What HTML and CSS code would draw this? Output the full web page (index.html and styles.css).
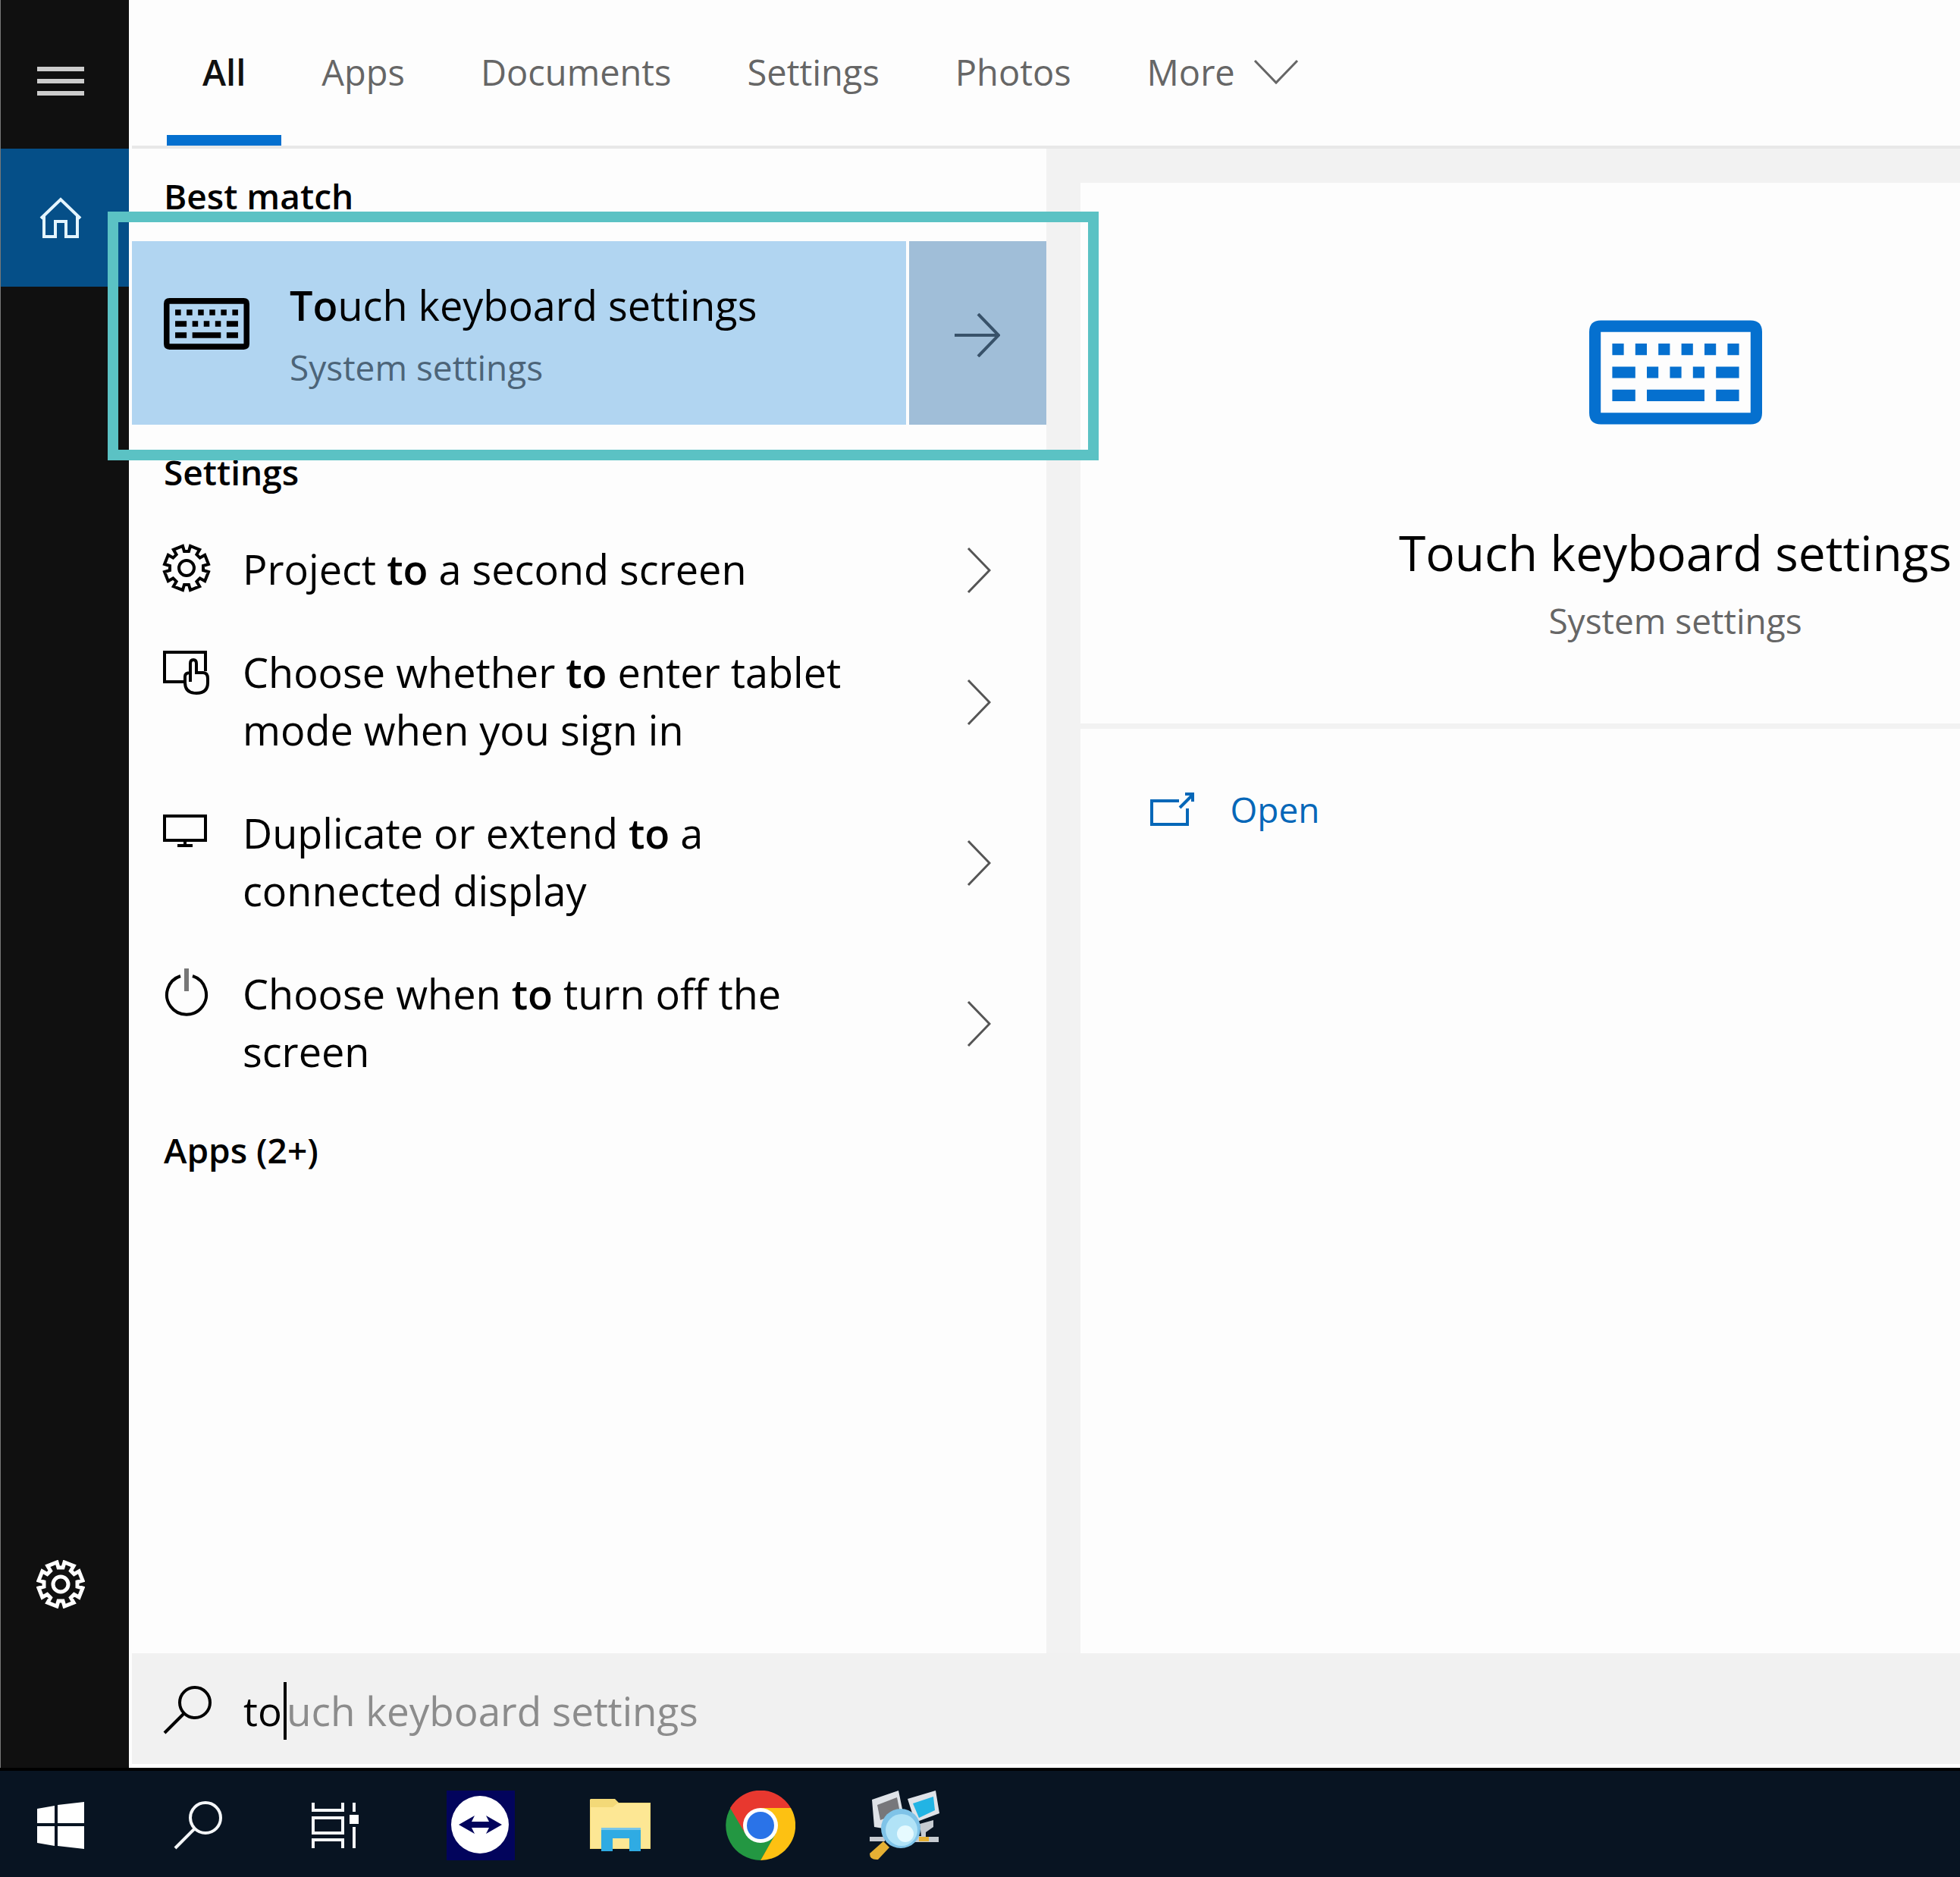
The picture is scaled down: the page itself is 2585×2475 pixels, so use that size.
FILE: index.html
```html
<!DOCTYPE html>
<html lang="en">
	<head>
		<meta charset="UTF-8" />
		<meta name="viewport" content="width=device-width, initial-scale=1.0" />
		<title>Search</title>
		<link rel="stylesheet" href="styles.css">
	</head>
	<body>
		<!-- shared icons -->
		<svg class="sprite" aria-hidden="true">
			<symbol id="gear" viewBox="-32 -32 64 64">
				<path d="M-5-29L-3-22H3L5-29L17.2-24.2L13.4-17.7L17.7-13.4L24.2-17.2L29-5L22-3V3L29 5L24.2 17.2L17.7 13.4L13.4 17.7L17.2 24.2L5 29L3 22H-3L-5 29L-17.2 24.2L-13.4 17.7L-17.7 13.4L-24.2 17.2L-29 5L-22 3V-3L-29-5L-24.2-17.2L-17.7-13.4L-13.4-17.7L-17.2-24.2Z" />
				<circle r="10" />
			</symbol>
			<symbol id="keyboard" viewBox="0 0 15 9">
				<path fill-rule="evenodd" d="M1 0H14Q15 0 15 1V8Q15 9 14 9H1Q0 9 0 8V1Q0 0 1 0ZM1 1V8H14V1Z" />
				<path d="M2 2h1v1H2zM4 2h1v1H4zM6 2h1v1H6zM8 2h1v1H8zM10 2h1v1h-1zM12 2h1v1h-1zM2 4h2v1H2zM5 4h1v1H5zM7 4h1v1H7zM9 4h1v1H9zM11 4h2v1h-2zM2 6h2v1H2zM5 6h5v1H5zM11 6h2v1h-2z" />
			</symbol>
			<symbol id="chevron" viewBox="0 0 32 62">
				<path d="M2 2L30 31L2 60" />
			</symbol>
			<symbol id="search" viewBox="0 0 64 64">
				<circle cx="42" cy="22" r="20" />
				<path d="M28 36L2 62" />
			</symbol>
		</svg>

		<div class="desktop">
			<div class="window">
				<nav class="sidebar">
					<button class="side-btn menu" aria-label="Menu">
						<svg width="62" height="38" viewBox="0 0 62 38"><path d="M0 3H62M0 19H62M0 35H62" stroke-width="6" /></svg>
					</button>
					<button class="side-btn home" aria-label="Home">
						<svg width="56" height="56" viewBox="0 0 56 56"><path d="M2 29L28 4L54 29M6 26V53H21V33H35V53H50V26" stroke-width="4" /></svg>
					</button>
					<button class="side-btn options" aria-label="Settings">
						<svg width="64" height="64"><use href="#gear" /></svg>
					</button>
				</nav>

				<main class="panel">
					<header class="tabs">
						<button class="tab active">All</button>
						<button class="tab">Apps</button>
						<button class="tab">Documents</button>
						<button class="tab">Settings</button>
						<button class="tab">Photos</button>
						<button class="tab">More
							<svg width="60" height="34" viewBox="0 0 60 34"><path d="M2 2L30 31L58 2" /></svg>
						</button>
					</header>

					<div class="content">
						<section class="results">
							<h2>Best match</h2>
							<div class="best">
								<button class="best-item">
									<svg class="keyboard" width="113" height="68"><use href="#keyboard" /></svg>
									<span>
										<span class="best-title"><b>To</b>uch keyboard settings</span>
										<span class="best-sub">System settings</span>
									</span>
								</button>
								<button class="best-more" aria-label="Show details">
									<svg width="60" height="58" viewBox="0 0 60 58"><path d="M0 29H57M31 1L58 29L31 57" /></svg>
								</button>
								<div class="highlight"></div>
							</div>

							<h2>Settings</h2>
							<button class="item">
								<svg class="icon" width="64" height="64"><use href="#gear" /></svg>
								<span>Project <b>to</b> a second screen</span>
								<svg class="chevron" width="32" height="62"><use href="#chevron" /></svg>
							</button>
							<button class="item">
								<svg class="icon" width="64" height="64" viewBox="0 0 64 64"><path d="M29 46H3V7H57V32M37 46V22Q37 17 41 17Q45 17 45 22V34H54Q60 34 60 42V47Q60 61 45 61Q30 61 30 47V39Q30 34 37 34" /></svg>
								<span>Choose whether <b>to</b> enter tablet<br>mode when you sign in</span>
								<svg class="chevron" width="32" height="62"><use href="#chevron" /></svg>
							</button>
							<button class="item">
								<svg class="icon" width="64" height="64" viewBox="0 0 64 64"><path d="M3 11H57V43H3ZM30 43V50M20 50H40" /></svg>
								<span>Duplicate or extend <b>to</b> a<br>connected display</span>
								<svg class="chevron" width="32" height="62"><use href="#chevron" /></svg>
							</button>
							<button class="item">
								<svg class="icon" width="64" height="64" viewBox="0 0 64 64"><path d="M24 10A26 26 0 1 0 40 10" /><path class="soft" d="M32 0V30" /></svg>
								<span>Choose when <b>to</b> turn off the<br>screen</span>
								<svg class="chevron" width="32" height="62"><use href="#chevron" /></svg>
							</button>

							<h2>Apps (2+)</h2>
						</section>

						<section class="preview">
							<div class="card">
								<div class="card-head">
									<svg class="keyboard" width="228" height="138"><use href="#keyboard" /></svg>
									<h1>Touch keyboard settings</h1>
									<p>System settings</p>
								</div>
								<a class="open" href="#">
									<svg width="58" height="44" viewBox="0 0 58 44"><path d="M38 11H2V42H49V21M39 20L55 4M46 2H56V12" /></svg>
									Open
								</a>
							</div>
						</section>
					</div>

					<label class="searchbar">
						<svg width="64" height="64"><use href="#search" /></svg>
						<span class="typed">
							<input type="text" value="to" aria-label="Search">
							<span class="caret"></span>
							<span class="hint">uch keyboard settings</span>
						</span>
					</label>
				</main>
			</div>

			<footer class="taskbar">
				<div class="system">
					<button aria-label="Start">
						<svg width="62" height="62" viewBox="0 0 62 62"><path fill="#fff" d="M0 9L23 5V28H0ZM27 4L62 0V28H27ZM0 32H23V58L0 54ZM27 32H62V62L27 58Z" /></svg>
					</button>
					<button aria-label="Search">
						<svg class="line" width="64" height="64"><use href="#search" /></svg>
					</button>
					<button aria-label="Task view">
						<svg class="line" width="62" height="60" viewBox="0 0 62 60"><path d="M2 0V10H41V0M2 60V49H41V60M2 20H41V40H2ZM56 0V12M56 32V60" /><path fill="#fff" stroke="none" d="M50 16H62V28H50Z" /></svg>
					</button>
				</div>
				<div class="apps">
					<button aria-label="TeamViewer">
						<svg width="90" height="92" viewBox="0 0 90 92">
							<path fill="#02045c" d="M0 0H90V92H0Z" />
							<circle cx="44" cy="45" r="38" fill="#fff" />
							<path fill="#02045c" d="M16 45L37 33L33 41H56L52 33L73 45L52 57L56 49H33L37 57Z" />
						</svg>
					</button>
					<button aria-label="File Explorer">
						<svg width="82" height="70" viewBox="0 0 82 70">
							<path fill="#f3d978" d="M2 0H34L39 5H81V66H1V1Z" />
							<path fill="#fde794" d="M2 11H31L37 6H80V65H2Z" />
							<path fill="#7ac6e8" d="M16 38H68V43H16Z" />
							<path fill="#2fabe3" d="M16 41H68V69H53V52H31V69H16Z" />
						</svg>
					</button>
					<button aria-label="Google Chrome">
						<svg width="92" height="92" viewBox="0 0 92 92">
							<path fill="#239742" d="M46 46L7 22A46 46 0 0 0 46 92L66 58Z" />
							<path fill="#fdc112" d="M46 23H86A46 46 0 0 1 46 92L66 57Z" />
							<path fill="#e8382f" d="M46 46L26 57L6 23A46 46 0 0 1 86 23H46Z" />
							<circle cx="46" cy="46" r="23" fill="#fff" />
							<circle cx="46" cy="46" r="18" fill="#2a73e8" />
						</svg>
					</button>
					<button aria-label="Network scanner">
						<svg width="92" height="92" viewBox="0 0 92 92">
							<path fill="#dfe3e8" d="M3 12L38 0L45 34L18 50L6 48ZM50 11L87 0L92 30L60 42Z" />
							<path fill="#77777b" d="M10 19L36 9L40 29L14 39Z" />
							<path fill="#22b4e4" d="M57 17L84 8L86 26L65 36Z" />
							<path fill="#c6cbd1" d="M66 44L84 39V48L74 55V61H91V68H60V60H68ZM0 61H20V67H0Z" />
							<path fill="#e5b034" d="M65 61H78V67H65ZM18 67L26 75L11 91Q0 92 0 83Z" />
							<circle cx="41" cy="50" r="26" fill="#7fc3e8" />
							<circle cx="42" cy="52" r="21" fill="#b1e3f7" />
							<circle cx="47" cy="57" r="11" fill="#e6faff" />
						</svg>
					</button>
				</div>
			</footer>
		</div>
	</body>
</html>
```

FILE: styles.css
```css
* {
	box-sizing: border-box;
}
body {
	margin: 0;
	font-family: "Open Sans", "Noto Sans", sans-serif;
	font-size: 54px;
	line-height: 76px;
	color: #000;
	background: #fdfdfd;
}
button,
input {
	font: inherit;
	color: inherit;
	background: none;
	border: 0;
	padding: 0;
	margin: 0;
}
button {
	text-align: left;
}
b {
	font-weight: 600;
}
svg {
	flex: none;
	display: block;
	fill: none;
	stroke: currentColor;
	stroke-width: 4;
}
.sprite {
	position: absolute;
	width: 0;
	height: 0;
}
.desktop {
	display: flex;
	flex-direction: column;
	min-height: 100vh;
	overflow: hidden;
}
.window {
	display: flex;
	flex: 1;
}

/* left bar */
.sidebar {
	display: flex;
	flex-direction: column;
	flex: none;
	width: 170px;
	padding-bottom: 151px;
	background: #101010;
	border-left: 1px solid #777;
}
.side-btn {
	display: flex;
	align-items: center;
	justify-content: center;
	height: 182px;
	padding-right: 12px;
	color: #fff;
}
.side-btn.menu {
	height: 196px;
	padding-top: 18px;
	color: #ccc;
}
.side-btn.home {
	color: #e4f5ff;
	background: #054f88;
}
.side-btn.options {
	margin-top: auto;
}
.side-btn.options svg {
	stroke-width: 5;
}

.panel {
	display: flex;
	flex-direction: column;
	flex: 1;
	min-width: 0;
	padding-left: 4px;
}

/* tabs */
.tabs {
	display: flex;
	gap: 6px;
	height: 196px;
	padding-left: 46px;
	font-size: 47px;
	border-bottom: 4px solid #e8e8e8;
}
.tab {
	display: flex;
	align-items: center;
	gap: 24px;
	padding: 0 47px;
	color: #666;
	border-top: 12px solid transparent;
	border-bottom: 14px solid transparent;
}
.tab svg {
	stroke-width: 3;
}
.tab.active {
	color: #111;
	font-weight: 600;
	border-bottom-color: #0570cf;
}

.content {
	display: grid;
	grid-template-columns: 1fr 1fr;
	flex: 1;
}

/* results */
h2 {
	margin: 0;
	padding: 30px 0 28px 42px;
	font-size: 46px;
	line-height: 64px;
	font-weight: 600;
}
.best {
	position: relative;
	display: flex;
	gap: 4px;
	height: 242px;
}
.best-item {
	display: flex;
	gap: 53px;
	flex: 1;
	padding: 43px 0 0 42px;
	background: #b1d5f1;
}
.best-item .keyboard {
	margin-top: 32px;
}
.keyboard {
	fill: currentColor;
	stroke: none;
}
.best-title,
.best-sub {
	display: block;
	line-height: 82px;
}
.best-sub {
	font-size: 46px;
	color: #4c6478;
}
.best-more {
	display: flex;
	align-items: center;
	justify-content: center;
	width: 181px;
	padding-top: 6px;
	color: #38526a;
	background: #a0bed8;
}
.highlight {
	position: absolute;
	z-index: 1;
	top: -39px;
	right: -69px;
	bottom: -47px;
	left: -32px;
	border: 14px solid #5bc2c4;
	pointer-events: none;
}
.item {
	display: flex;
	align-items: center;
	width: 100%;
	padding: 30px 73px 30px 40px;
}
.item span {
	flex: 1;
	margin: 0 90px 0 42px;
}
.item .icon {
	align-self: flex-start;
	margin-top: 5px;
}
.soft {
	stroke: #777;
	stroke-width: 6;
}
.chevron {
	margin-top: 4px;
	color: #555;
	stroke-width: 3;
}

/* preview */
.preview {
	min-width: 0;
	padding: 45px 0 0 45px;
	background: #f2f2f2;
}
/* the card runs past the right side of the screen */
.card {
	min-width: 1570px;
	height: 100%;
	background: #fdfdfd;
}
.card-head {
	display: flex;
	flex-direction: column;
	align-items: center;
	padding: 181px 0 104px;
	border-bottom: 7px solid #f2f2f2;
}
.card-head .keyboard {
	color: #0570cf;
}
h1 {
	margin: 125px 0 13px;
	font-size: 64px;
	line-height: 88px;
	font-weight: 400;
}
.card-head p {
	margin: 0;
	font-size: 46px;
	line-height: 64px;
	color: #666;
}
.open {
	display: flex;
	align-items: center;
	gap: 48px;
	padding: 74px 92px;
	font-size: 46px;
	line-height: 64px;
	color: #0667b8;
	text-decoration: none;
}

/* search box */
.searchbar {
	display: flex;
	align-items: center;
	gap: 42px;
	height: 151px;
	padding: 4px 0 0 41px;
	font-size: 53px;
	background: #f1f1f1;
	border-bottom: 5px solid #fff;
}
.typed {
	display: flex;
	padding-top: 2px;
}
.typed input {
	width: 53px;
	height: 76px;
	outline: 0;
}
.caret {
	width: 4px;
	background: #000;
}
.hint {
	color: #8c8c8c;
}

/* taskbar */
.taskbar {
	display: flex;
	align-items: center;
	gap: 116px;
	height: 144px;
	padding: 4px 0 0 49px;
	background: #081422;
	border-top: 4px solid #000;
}
.taskbar svg {
	stroke: none;
}
.taskbar .line {
	stroke: #f4f6f8;
}
.system,
.apps {
	display: flex;
	align-items: center;
	gap: 118px;
}
.apps {
	gap: 98px;
}
```
